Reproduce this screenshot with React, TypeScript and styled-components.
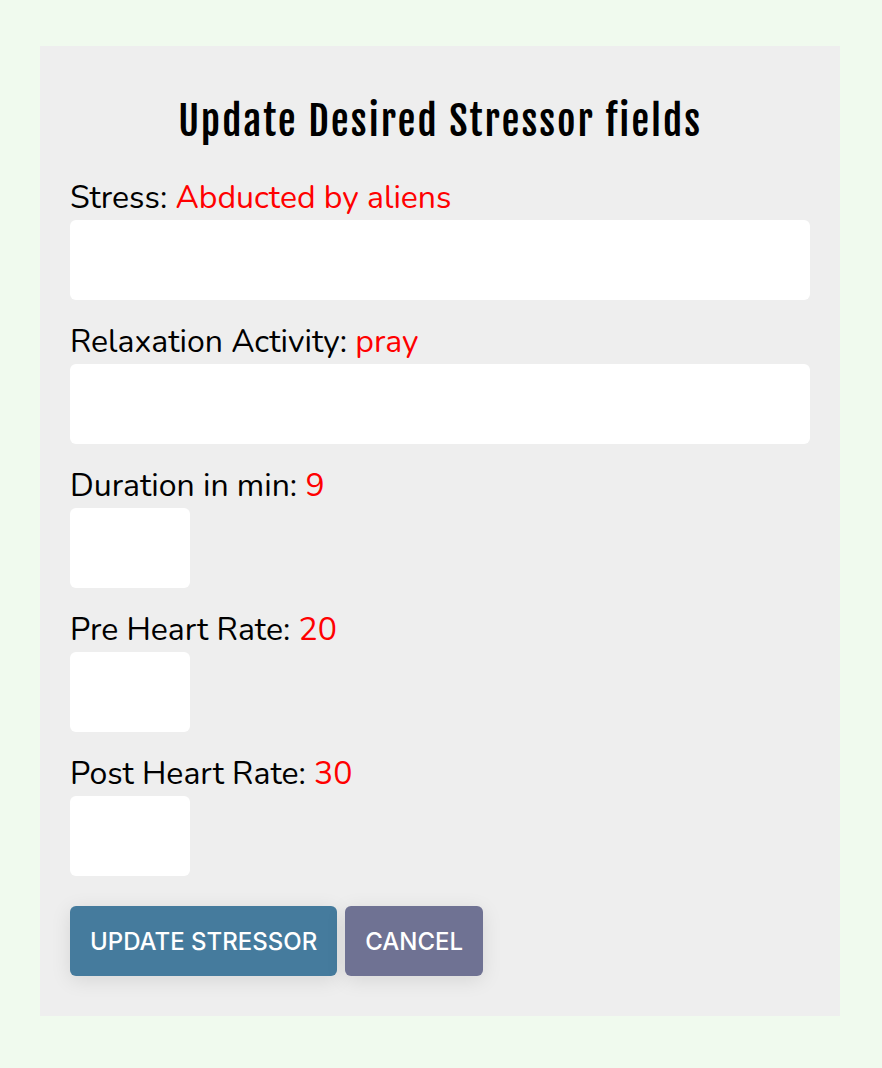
import React from "react";
import styled, { createGlobalStyle } from "styled-components";

const GlobalStyle = createGlobalStyle`
  *, *::before, *::after { box-sizing: border-box; }
  body {
    margin: 0;
    background: #f0faee;
    color: #000;
    font-family: "Nunito", "Open Sans", "Noto Sans", sans-serif;
    font-size: 32px;
  }
`;

const Page = styled.main`
  min-height: 100vh;
  padding: 46px 42px 52px 40px;
`;

const Form = styled.form`
  display: flex;
  flex-direction: column;
  padding: 40px 30px;
  background: #eee;
`;

const Title = styled.h2`
  margin: 0 0 24px;
  text-align: center;
  font-family: "Fjalla One", "Open Sans", sans-serif;
  font-size: 40px;
  font-weight: 400;
  letter-spacing: 2px;
  line-height: 70px;
`;

const Field = styled.div`
  display: flex;
  flex-direction: column;
  gap: 4px;
  margin-bottom: 24px;
`;

const Label = styled.label`
  line-height: 36px;
`;

const Current = styled.span`
  color: #ff0000;
`;

const Input = styled.input<{ $short?: boolean }>`
  width: ${(p) => (p.$short ? "120px" : "100%")};
  height: 80px;
  padding: 0 20px;
  border: 0;
  border-radius: 6px;
  background: #fff;
  font: inherit;
`;

const Actions = styled.div`
  display: flex;
  gap: 8px;
  margin-top: 6px;
`;

const Button = styled.button<{ $tone: string }>`
  height: 70px;
  padding: 0 20px;
  border: 0;
  border-radius: 6px;
  background: ${(p) => p.$tone};
  box-shadow: 0 4px 20px rgba(0, 0, 0, 0.1);
  color: #fff;
  font-family: Inter, sans-serif;
  font-size: 24px;
  font-weight: 500;
  text-transform: uppercase;
`;

const fields = [
  { id: "stress", label: "Stress", value: "Abducted by aliens" },
  { id: "activity", label: "Relaxation Activity", value: "pray" },
  { id: "duration", label: "Duration in min", value: "9", short: true },
  { id: "pre", label: "Pre Heart Rate", value: "20", short: true },
  { id: "post", label: "Post Heart Rate", value: "30", short: true },
];

export default function App() {
  return (
    <>
      <GlobalStyle />
      <Page>
        <Form onSubmit={(e) => e.preventDefault()}>
          <Title>Update Desired Stressor fields</Title>
          {fields.map((f) => (
            <Field key={f.id}>
              <Label htmlFor={f.id}>
                {f.label}: <Current>{f.value}</Current>
              </Label>
              <Input id={f.id} type="text" $short={f.short} />
            </Field>
          ))}
          <Actions>
            <Button type="submit" $tone="#457b9d">Update Stressor</Button>
            <Button type="button" $tone="#6f7293">Cancel</Button>
          </Actions>
        </Form>
      </Page>
    </>
  );
}
